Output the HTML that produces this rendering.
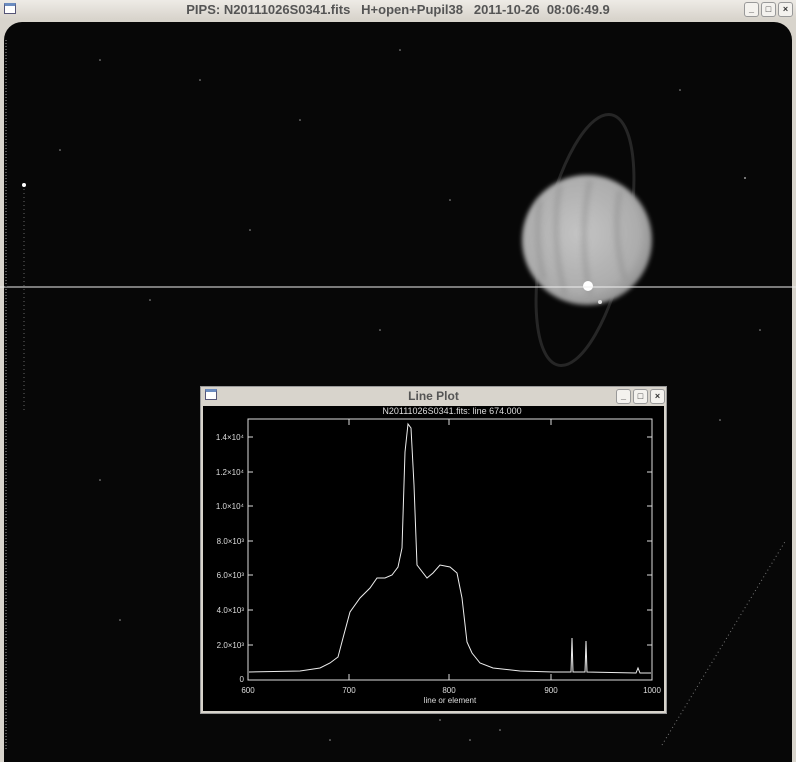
<!DOCTYPE html>
<html><head><style>
body{margin:0;width:796px;height:750px;overflow:hidden;background:#d8d4cc;font-family:"Liberation Sans",sans-serif;position:relative}
.tb{position:absolute;left:0;top:0;width:796px;height:19px;background:linear-gradient(#eeebe6,#d8d4cc);text-align:center;font:bold 13px "Liberation Sans",sans-serif;color:#555;line-height:19px}
.btn{position:absolute;top:2px;width:13px;height:13px;border:1px solid #999;border-radius:3px;background:#f4f2ee;font-size:9px;line-height:13px;text-align:center;color:#333}
.ico{position:absolute;left:4px;top:3px;width:12px;height:11px;border:1px solid #557;background:#fff;border-top:3px solid #6b8cc0;box-sizing:border-box}
.img{position:absolute;left:4px;top:22px;width:788px;height:740px;background:#070707;border-radius:18px 18px 0 0}
</style></head><body>
<div class="tb"><div class="ico"></div>PIPS: N20111026S0341.fits &nbsp; H+open+Pupil38 &nbsp; 2011-10-26 &nbsp;08:06:49.9
<div class="btn" style="left:744px">_</div><div class="btn" style="left:761px">□</div><div class="btn" style="left:778px">×</div></div>
<div class="img"></div>
<svg width="796" height="750" style="position:absolute;left:0;top:0">
<defs><radialGradient id="pl" cx="0.45" cy="0.45" r="0.6"><stop offset="0" stop-color="#c4c4c4"/><stop offset="0.75" stop-color="#acacac"/><stop offset="1" stop-color="#8a8a8a"/></radialGradient>
<filter id="bl"><feGaussianBlur stdDeviation="2"/></filter><filter id="bl2"><feGaussianBlur stdDeviation="3"/></filter></defs>
<ellipse cx="585" cy="240" rx="42" ry="128" fill="none" stroke="#262626" stroke-width="3" transform="rotate(12 585 240)"/>
<circle cx="587" cy="240" r="65" fill="url(#pl)" filter="url(#bl)"/>
<g filter="url(#bl2)" fill="none" stroke="#8a8a8a" stroke-width="4" opacity=".6">
<path d="M560 185q-10 50 5 110"/><path d="M590 180q-12 55 0 115"/><path d="M620 190q-8 45 5 90"/><path d="M540 200q-6 40 4 80"/></g>
<circle cx="588" cy="286" r="5" fill="#fff"/><circle cx="600" cy="302" r="2" fill="#ddd"/>
<line x1="0" y1="287" x2="796" y2="287" stroke="#eee" stroke-width="1"/>
<line x1="24" y1="185" x2="24" y2="410" stroke="#666" stroke-width="1" stroke-dasharray="1 3"/>
<circle cx="24" cy="185" r="2" fill="#fff"/>
<line x1="662" y1="745" x2="786" y2="540" stroke="#777" stroke-dasharray="1 3"/>
<line x1="6" y1="40" x2="6" y2="750" stroke="#555" stroke-dasharray="1 2" stroke-width="2"/>
<g fill="#999"><circle cx="100" cy="60" r=".8"/><circle cx="300" cy="120" r=".8"/><circle cx="450" cy="200" r=".8"/><circle cx="745" cy="178" r="1"/><circle cx="150" cy="300" r=".8"/><circle cx="720" cy="420" r=".8"/><circle cx="100" cy="480" r=".8"/><circle cx="500" cy="730" r=".8"/><circle cx="330" cy="740" r=".8"/><circle cx="60" cy="150" r=".8"/><circle cx="200" cy="80" r=".8"/><circle cx="400" cy="50" r=".8"/><circle cx="680" cy="90" r=".8"/><circle cx="760" cy="330" r=".8"/><circle cx="120" cy="620" r=".8"/><circle cx="440" cy="720" r=".8"/><circle cx="470" cy="740" r=".8"/><circle cx="250" cy="230" r=".8"/><circle cx="380" cy="330" r=".8"/></g>
</svg>
<div style="position:absolute;left:200px;top:386px;width:467px;height:328px;background:#d8d4cc;border:1px solid #999;box-sizing:border-box">
<div style="height:18px;text-align:center;font:bold 12px 'Liberation Sans',sans-serif;color:#555;line-height:18px;position:relative">
<div class="ico" style="top:2px"></div>Line Plot
<div class="btn" style="left:415px;top:2px">_</div><div class="btn" style="left:432px;top:2px">□</div><div class="btn" style="left:449px;top:2px">×</div></div>
<div style="position:absolute;left:2px;top:19px;width:461px;height:305px;background:#000"></div>
</div>
<svg width="796" height="750" style="position:absolute;left:0;top:0" font-family="Liberation Sans,sans-serif" fill="#ddd" font-size="8">
<text x="452" y="414" text-anchor="middle" font-size="9">N20111026S0341.fits: line 674.000</text>
<rect x="248" y="419" width="404" height="261" fill="none" stroke="#ddd"/>
<g stroke="#ddd">
<path d="M349 680v-6M449 680v-6M551 680v-6M349 419v6M449 419v6M551 419v6M248 645h5M248 610h5M248 575h5M248 541h5M248 506h5M248 472h5M248 437h5M652 645h-5M652 610h-5M652 575h-5M652 541h-5M652 506h-5M652 472h-5M652 437h-5"/>
</g>
<g text-anchor="end"><text x="244" y="682">0</text><text x="244" y="648">2.0×10³</text><text x="244" y="613">4.0×10³</text><text x="244" y="578">6.0×10³</text><text x="244" y="544">8.0×10³</text><text x="244" y="509">1.0×10⁴</text><text x="244" y="475">1.2×10⁴</text><text x="244" y="440">1.4×10⁴</text></g>
<g text-anchor="middle"><text x="248" y="693">600</text><text x="349" y="693">700</text><text x="449" y="693">800</text><text x="551" y="693">900</text><text x="652" y="693">1000</text><text x="450" y="703">line or element</text></g>
<polyline fill="none" stroke="#eee" stroke-width="1" points="249,672 300,671 320,668 330,663 338,657 343,638 350,612 360,598 370,588 377,578 385,578 392,575 398,567 402,548 405,452 408,424 411,428 414,485 417,565 427,578 433,573 440,565 450,567 457,573 462,598 467,642 472,653 480,663 493,668 520,671 553,672 571,672 572,638 573,672 585,672 586,641 587,672 636,673 638,668 640,673 651,673"/>
</svg>
</body></html>
